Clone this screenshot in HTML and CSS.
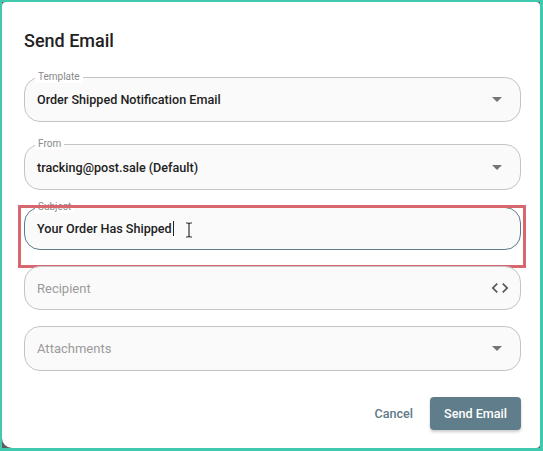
FILE: index.html
```html
<!DOCTYPE html>
<html lang="en">
<head>
  <meta charset="UTF-8">
  <meta name="viewport" content="width=device-width, initial-scale=1.0">
  <title>Send Email</title>
  <link rel="stylesheet" href="styles.css">
</head>
<body>
  <div class="backdrop">
    <div class="dialog">
      <h1 class="dialog-title">Send Email</h1>

      <div class="field field-template">
        <span class="field-label">Template</span>
        <span class="field-value">Order Shipped Notification Email</span>
        <svg class="select-arrow" width="10" height="5" viewBox="0 0 10 5"><path d="M0 0h10L5 5z"/></svg>
      </div>

      <div class="field field-from">
        <span class="field-label">From</span>
        <span class="field-value">tracking@post.sale (Default)</span>
        <svg class="select-arrow" width="10" height="5" viewBox="0 0 10 5"><path d="M0 0h10L5 5z"/></svg>
      </div>

      <div class="field field-subject">
        <span class="field-label">Subject</span>
        <span class="field-value">Your Order Has Shipped<span class="caret"></span></span>
        <svg class="ibeam" width="8" height="16" viewBox="0 0 8 16">
          <path d="M1 1h2l1 1 1-1h2M4 2v12M1 15h2l1-1 1 1h2" fill="none" stroke="#333" stroke-width="1.2"/>
        </svg>
        <div class="highlight"></div>
      </div>

      <div class="field field-recipient">
        <span class="field-placeholder">Recipient</span>
        <svg class="code-icon" width="20" height="20" viewBox="0 0 24 24"><path d="M9.4 16.6L4.8 12l4.6-4.6L8 6l-6 6 6 6 1.4-1.4zm5.2 0l4.6-4.6-4.6-4.6L16 6l6 6-6 6-1.4-1.4z"/></svg>
      </div>

      <div class="field field-attachments">
        <span class="field-placeholder">Attachments</span>
        <svg class="select-arrow" width="10" height="5" viewBox="0 0 10 5"><path d="M0 0h10L5 5z"/></svg>
      </div>

      <div class="actions">
        <button class="btn btn-text">Cancel</button>
        <button class="btn btn-primary">Send Email</button>
      </div>
    </div>
  </div>
</body>
</html>
```

FILE: styles.css
```css
html, body {
  margin: 0;
  padding: 0;
  height: 100%;
}

body {
  background-color: #41c9af;
  padding: 2px 3px 3px 2px;
  box-sizing: border-box;
  font-family: Roboto, 'Noto Sans', sans-serif;
  color: #212121;
}

.backdrop {
  height: 100%;
  background-color: #5c5c5c;
}

.dialog {
  height: 100%;
  box-sizing: border-box;
  background-color: #ffffff;
  border-radius: 4px 4px 4px 10px;
  padding: 27px 19px 18px 22px;
  display: flex;
  flex-direction: column;
}

.dialog-title {
  margin: 0 0 24px 0;
  font-size: 18px;
  line-height: 24px;
  font-weight: 500;
  color: #222222;
}

.field {
  position: relative;
  display: flex;
  align-items: center;
  box-sizing: border-box;
  height: 45px;
  padding: 0 18px 0 12px;
  border: 1px solid #c4c4c4;
  border-radius: 16px;
  background-color: #fafafa;
}

.field-template {
  margin-bottom: 22px;
}

.field-from {
  height: 46px;
  margin-bottom: 17px;
}

.field-subject {
  height: 43px;
  margin-bottom: 16px;
  border-color: #5f7b89;
}

.field-recipient {
  height: 44px;
  margin-bottom: 16px;
  padding-right: 10px;
}

.field-label {
  position: absolute;
  top: -7px;
  left: 10px;
  padding: 0 3px;
  font-size: 10px;
  line-height: 12px;
  color: #8a8a8a;
  background-color: #ffffff;
}

.field-value {
  flex: 1;
  font-size: 12.6px;
  font-weight: 500;
  color: #222222;
  display: flex;
  align-items: center;
}

.field-placeholder {
  flex: 1;
  font-size: 13px;
  color: #9a9a9a;
}

.caret {
  display: inline-block;
  width: 1px;
  height: 15px;
  margin-left: 1px;
  background-color: #222222;
}

.select-arrow {
  fill: #757575;
}

.code-icon {
  fill: #555555;
}

.ibeam {
  position: absolute;
  left: 160px;
  top: 14px;
}

.highlight {
  position: absolute;
  left: -7px;
  right: -6px;
  top: -3px;
  height: 57px;
  border: 3px solid #d7666f;
  pointer-events: none;
}

.actions {
  margin-top: 26px;
  display: flex;
  justify-content: flex-end;
  align-items: center;
  gap: 17px;
}

.btn {
  font-family: Roboto, 'Noto Sans', sans-serif;
  font-size: 12.6px;
  font-weight: 500;
  border: none;
  cursor: pointer;
}

.btn-text {
  background: none;
  color: #5f7a88;
  padding: 8px 0;
}

.btn-primary {
  height: 33px;
  width: 91px;
  padding: 0;
  background-color: #607d8b;
  color: #ffffff;
  border-radius: 4px;
  box-shadow: 0 2px 3px rgba(0, 0, 0, 0.2);
}
```
